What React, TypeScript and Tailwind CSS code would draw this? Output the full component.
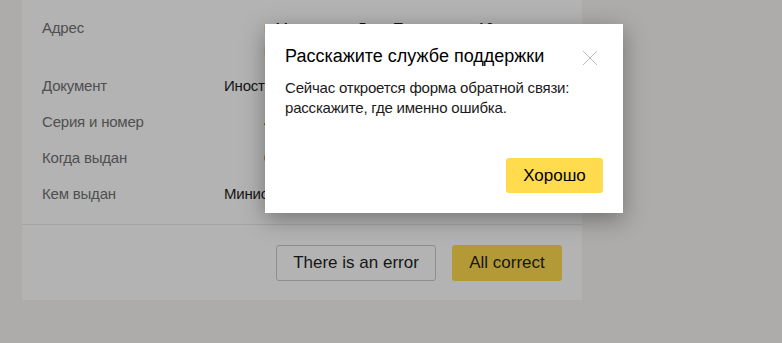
import React from "react";

const rows: { label: string; value: string; value2?: string; indent?: boolean }[] = [
  { label: "Дата рождения", value: "12 сентября 1990 года" },
  { label: "Адрес", value: "г. Москва, ул. Льва Толстого, д. 16", value2: "кв. 122, корпус 1", indent: true },
  { label: "Документ", value: "Иностранный паспорт" },
  { label: "Серия и номер", value: "45 07 123456", indent: true },
  { label: "Когда выдан", value: "01.02.2015", indent: true },
  { label: "Кем выдан", value: "Министерство внутренних дел" },
];

export default function App() {
  return (
    <div
      className="relative w-[782px] h-[343px] overflow-hidden bg-[#adacaa]"
      style={{ fontFamily: '"Liberation Sans", Arial, sans-serif' }}
    >
      <div className="ml-[22px] w-[560px] bg-[#b3b3b3] -mt-[26px]">
        <div className="px-[20px] pb-[12px]">
          {rows.map((r) => (
            <div key={r.label} className="flex py-[7px] text-[15px] leading-[22px] tracking-[-0.2px]">
              <div className="w-[182px] shrink-0 text-[#4f4f4f]">{r.label}</div>
              <div className={"text-[#141414] whitespace-nowrap " + (r.indent ? "pl-[40px]" : "")}>
                <div>{r.value}</div>
                {r.value2 && <div>{r.value2}</div>}
              </div>
            </div>
          ))}
        </div>
        <div className="h-px bg-[#a4a4a4]" />
        <div className="flex justify-end gap-[16px] pt-[20px] pb-[19px] pr-[20px]">
          <button className="h-[36px] w-[160px] rounded-[3px] border border-[#8e8e8e] text-[17px] text-[#161616]">
            There is an error
          </button>
          <button className="h-[36px] w-[110px] rounded-[3px] bg-[#b39a36] text-[17px] text-[#161616]">
            All correct
          </button>
        </div>
      </div>

      <div className="absolute left-[265px] top-[24px] w-[358px] h-[189px] bg-white shadow-[0_6px_22px_rgba(0,0,0,0.35)] px-[20px] pt-[20px]">
        <div className="flex items-start justify-between">
          <div className="text-[18px] leading-[24px] text-black">Расскажите службе поддержки</div>
          <svg width="16" height="16" viewBox="0 0 16 16" className="mt-[6px] mr-[5px]">
            <path d="M1 1L15 15M15 1L1 15" stroke="#bdbdbd" strokeWidth="1" fill="none" />
          </svg>
        </div>
        <div className="mt-[10px] text-[15px] leading-[20px] tracking-[-0.2px] text-[#1a1a1a]">
          Сейчас откроется форма обратной связи:
          <br />
          расскажите, где именно ошибка.
        </div>
        <div className="flex justify-end mt-[40px]">
          <button className="h-[35px] w-[97px] rounded-[3px] bg-[#ffdb4d] text-[17px] text-black">
            Хорошо
          </button>
        </div>
      </div>
    </div>
  );
}
